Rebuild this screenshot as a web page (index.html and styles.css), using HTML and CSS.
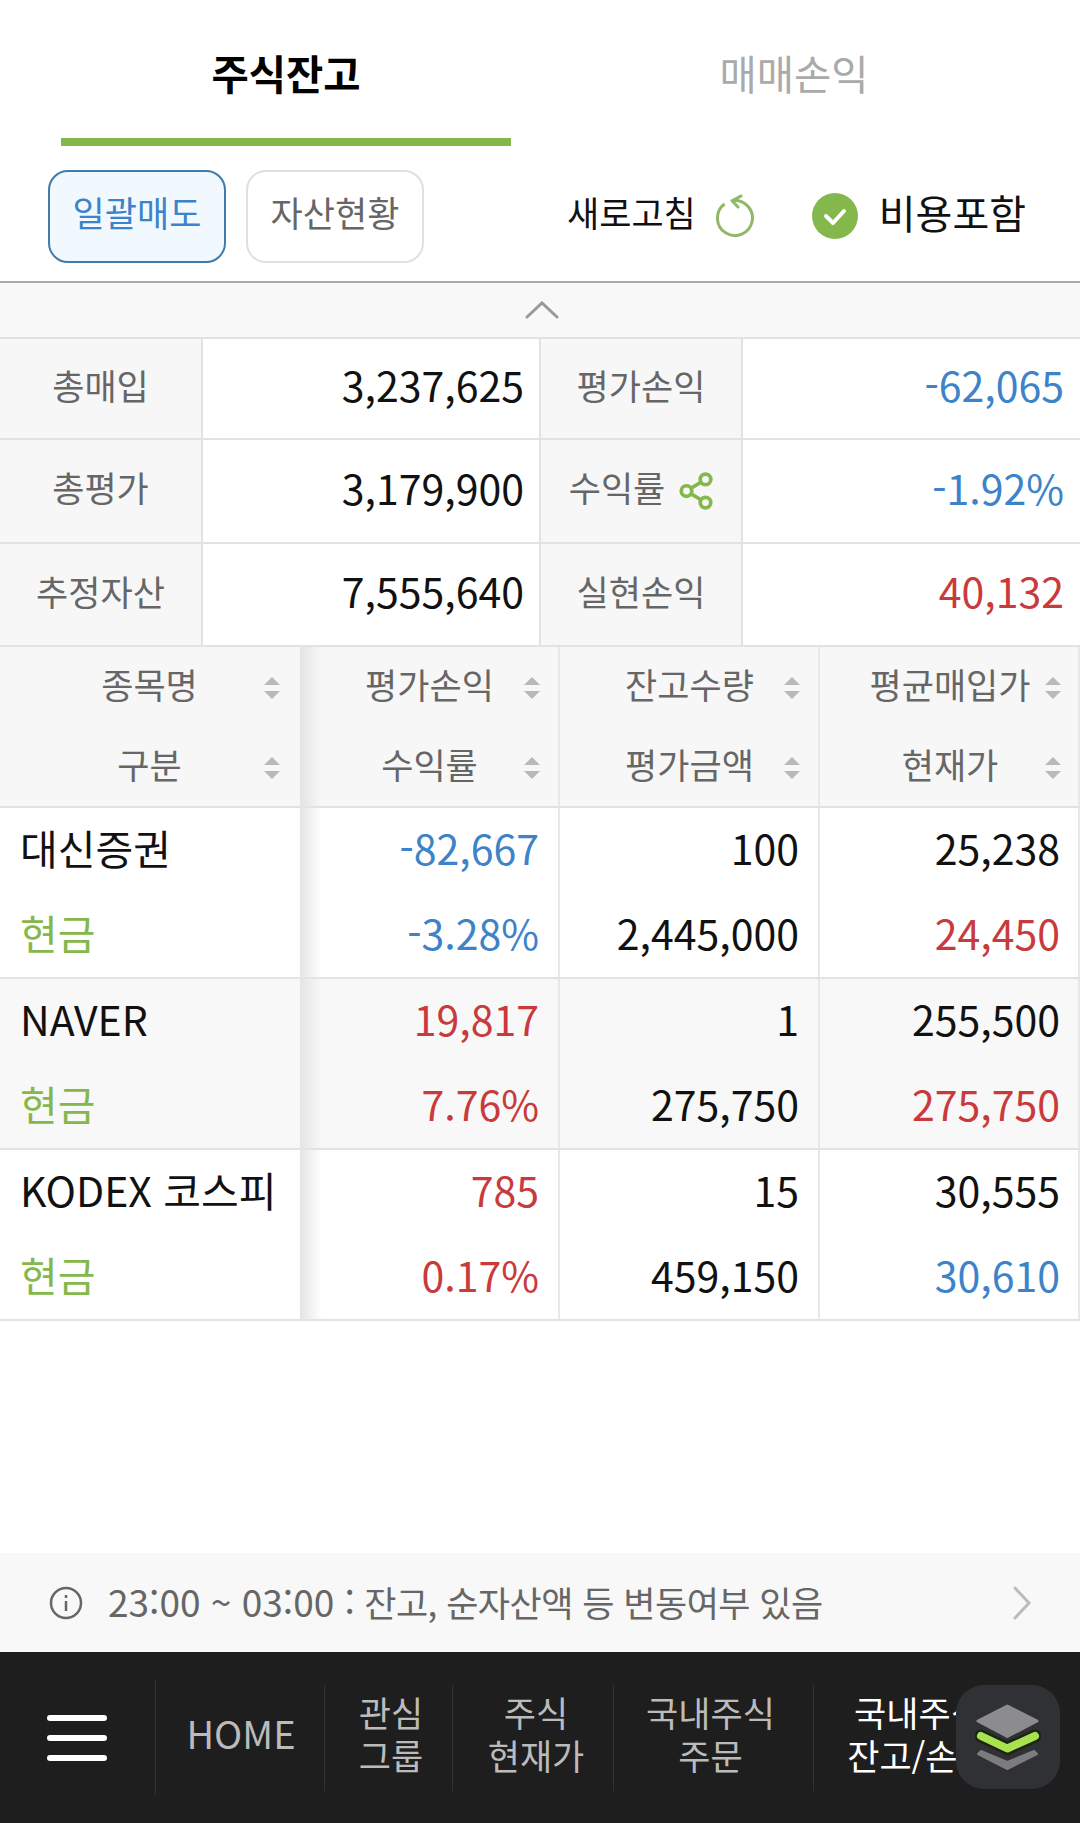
FILE: index.html

```html
<!DOCTYPE html>
<html lang="ko">
<head>
    <meta charset="UTF-8">
    <meta name="viewport" content="width=device-width, initial-scale=1.0">
    <title>주식잔고</title>
    <link rel="stylesheet" href="styles.css">
</head>
<body>
    <svg class="defs" width="0" height="0">
        <symbol id="sort" viewBox="0 0 16 22">
            <path d="M8 0l8 8H0z M0 14h16l-8 8z" fill="#b9b9b9"/>
        </symbol>
    </svg>

    <div class="page">
        <div class="tabs">
            <div class="tab active">주식잔고</div>
            <div class="tab">매매손익</div>
        </div>

        <div class="toolbar">
            <div class="btn btn-primary">일괄매도</div>
            <div class="btn">자산현황</div>
            <div class="refresh">
                <span>새로고침</span>
                <svg width="40" height="44" viewBox="0 0 40 44" fill="none" stroke="#8fb868" stroke-width="3">
                    <path d="M17 6.800A17.500 17.500 0 1 1 9.500 10"/>
                    <path d="M26 2l-9 4.800L23 13" stroke-linecap="round" stroke-linejoin="round"/>
                </svg>
            </div>
            <div class="include">
                <svg width="46" height="46" viewBox="0 0 46 46">
                    <circle cx="23" cy="23" r="23" fill="#84b84c"/>
                    <path d="M14 23l7 7 11-12" fill="none" stroke="#fff" stroke-width="4" stroke-linecap="round" stroke-linejoin="round"/>
                </svg>
                <span>비용포함</span>
            </div>
        </div>

        <div class="collapse">
            <svg width="34" height="18" viewBox="0 0 34 18" fill="none" stroke="#999" stroke-width="3" stroke-linecap="round">
                <path d="M2 16L17 2l15 14"/>
            </svg>
        </div>

        <div class="summary">
            <div class="label">총매입</div>
            <div class="value">3,237,625</div>
            <div class="label">평가손익</div>
            <div class="value blue">-62,065</div>

            <div class="label">총평가</div>
            <div class="value">3,179,900</div>
            <div class="label">
                수익률
                <svg class="share" width="34" height="38" viewBox="0 0 32 36" fill="none" stroke="#84b84c" stroke-width="3.500">
                    <circle cx="25" cy="7" r="5"/>
                    <circle cx="7" cy="18" r="5"/>
                    <circle cx="25" cy="29" r="5"/>
                    <path d="M11 15.500l10-6M11 20.500l10 6"/>
                </svg>
            </div>
            <div class="value blue">-1.92%</div>

            <div class="label">추정자산</div>
            <div class="value">7,555,640</div>
            <div class="label">실현손익</div>
            <div class="value red">40,132</div>
        </div>

        <div class="stocks">
            <div class="stock-row stock-head">
                <div class="cell">
                    <div class="head-line"><span>종목명</span><svg class="sort"><use href="#sort"/></svg></div>
                    <div class="head-line"><span>구분</span><svg class="sort"><use href="#sort"/></svg></div>
                </div>
                <div class="cell">
                    <div class="head-line"><span>평가손익</span><svg class="sort"><use href="#sort"/></svg></div>
                    <div class="head-line"><span>수익률</span><svg class="sort"><use href="#sort"/></svg></div>
                </div>
                <div class="cell">
                    <div class="head-line"><span>잔고수량</span><svg class="sort"><use href="#sort"/></svg></div>
                    <div class="head-line"><span>평가금액</span><svg class="sort"><use href="#sort"/></svg></div>
                </div>
                <div class="cell">
                    <div class="head-line"><span>평균매입가</span><svg class="sort"><use href="#sort"/></svg></div>
                    <div class="head-line"><span>현재가</span><svg class="sort"><use href="#sort"/></svg></div>
                </div>
            </div>

            <div class="stock-row">
                <div class="cell name"><div>대신증권</div><div class="green">현금</div></div>
                <div class="cell"><div class="blue">-82,667</div><div class="blue">-3.28%</div></div>
                <div class="cell"><div>100</div><div>2,445,000</div></div>
                <div class="cell"><div>25,238</div><div class="red">24,450</div></div>
            </div>
            <div class="stock-row alt">
                <div class="cell name"><div>NAVER</div><div class="green">현금</div></div>
                <div class="cell"><div class="red">19,817</div><div class="red">7.76%</div></div>
                <div class="cell"><div>1</div><div>275,750</div></div>
                <div class="cell"><div>255,500</div><div class="red">275,750</div></div>
            </div>
            <div class="stock-row">
                <div class="cell name"><div>KODEX 코스피</div><div class="green">현금</div></div>
                <div class="cell"><div class="red">785</div><div class="red">0.17%</div></div>
                <div class="cell"><div>15</div><div>459,150</div></div>
                <div class="cell"><div>30,555</div><div class="blue">30,610</div></div>
            </div>
        </div>

        <div class="spacer"></div>

        <div class="notice">
            <svg width="34" height="34" viewBox="0 0 34 34" fill="none" stroke="#666" stroke-width="2.500">
                <circle cx="17" cy="17" r="15"/>
                <path d="M17 15v10"/>
                <path d="M17 9v3"/>
            </svg>
            <span class="notice-text"><span class="notice-time">23:00 ~ 03:00 :</span> 잔고, 순자산액 등 변동여부 있음</span>
            <svg class="notice-arrow" width="20" height="34" viewBox="0 0 20 34" fill="none" stroke="#bbb" stroke-width="3" stroke-linecap="round">
                <path d="M3 2l14 15L3 32"/>
            </svg>
        </div>

        <div class="nav">
            <div class="menu"><i></i><i></i><i></i></div>
            <div class="nav-item home">HOME</div>
            <div class="nav-item w-group">관심<br>그룹</div>
            <div class="nav-item w-price">주식<br>현재가</div>
            <div class="nav-item w-order">국내주식<br>주문</div>
            <div class="nav-item w-balance active">국내주식<br>잔고/손익</div>
        </div>

        <div class="float-btn">
            <svg width="66" height="66" viewBox="0 0 66 66">
                <polygon points="32.300,2 62,17 32.300,32.500 3,17" fill="#8c8c8e" stroke="#8c8c8e" stroke-width="3" stroke-linejoin="round"/>
                <polygon points="6,47 32.300,58 59,47 62,50 32.300,65 3,50" fill="#7c7c7e" stroke="#7c7c7e" stroke-width="2" stroke-linejoin="round"/>
                <polyline points="6,32 32.300,44.500 60,32" fill="none" stroke="#1e2414" stroke-width="13" stroke-linecap="round" stroke-linejoin="round"/>
                <polyline points="6,32 32.300,44.500 60,32" fill="none" stroke="#a8e24e" stroke-width="8" stroke-linecap="round" stroke-linejoin="round"/>
            </svg>
        </div>
    </div>
</body>
</html>
```

FILE: styles.css

```css
* { margin: 0; padding: 0; box-sizing: border-box; }
body { font-family: "Noto Sans CJK KR", "Noto Sans", sans-serif; background: #fff; color: #111; }
.defs { position: absolute; }
.page { position: relative; width: 1080px; height: 1823px; display: flex; flex-direction: column; overflow: hidden; }

.blue { color: #3d83c9; }
.red { color: #c93a3c; }
.green { color: #84b84c; }

.tabs { height: 146px; padding: 0 61px; display: flex; gap: 58px; }
.tab { width: 450px; font-size: 40.5px; line-height: 146px; text-align: center; color: #aaa; }
.tab.active { font-weight: 700; color: #000; border-bottom: 8px solid #84b84c; }

.toolbar { height: 135px; padding: 24px 0 0 48px; display: flex; align-items: flex-start; }
.btn { width: 178px; height: 93px; margin-right: 20px; border: 2px solid #e0e0e0; border-radius: 20px; font-size: 35px; line-height: 80px; text-align: center; color: #666; }
.btn-primary { background: #f2f9fe; border-color: #3f7cac; color: #3d83c9; }
.refresh { height: 92px; margin-left: 123px; display: flex; align-items: center; gap: 19px; font-size: 35px; color: #111; }
.refresh span, .include span { padding-bottom: 9px; }
.include { height: 92px; margin-left: 57px; display: flex; align-items: center; gap: 21px; font-size: 40px; color: #111; }

.collapse { height: 58px; padding-left: 4px; background: #f8f8f8; border-top: 2px solid #aaa; border-bottom: 2px solid #e2e2e2; display: flex; align-items: center; justify-content: center; }

.summary { height: 308px; display: grid; grid-template-columns: 203px 338px 202px 337px; grid-template-rows: 101px 104px 103px; }
.summary .label, .summary .value { display: flex; align-items: center; padding-bottom: 9px; border-bottom: 2px solid #e2e2e2; font-size: 41px; }
.summary .label { justify-content: center; gap: 14px; background: #f7f7f7; font-size: 35px; color: #666; border-right: 2px solid #e2e2e2; }
.summary .value { justify-content: flex-end; padding-right: 15px; border-right: 2px solid #e2e2e2; }
.summary .value:nth-child(4n) { padding-right: 16px; border-right: 0; }
.share { margin-top: 8px; }

.stocks { position: relative; }
.stocks::after { content: ""; position: absolute; left: 300px; top: 0; bottom: 0; width: 22px; background: linear-gradient(90deg, #e4e4e4, rgba(235,235,235,0)); }
.stock-row { height: 171px; display: grid; grid-template-columns: 300px 260px 260px 260px; grid-template-rows: 169px; border-bottom: 2px solid #e2e2e2; }
.stock-head { height: 161px; grid-template-rows: 159px; background: #f7f7f7; }
.alt { background: #f8f8f8; }
.cell { padding: 0 19px 6px 20px; border-right: 2px solid #e8e8e8; font-size: 41px; line-height: 85px; text-align: right; display: flex; flex-direction: column; justify-content: center; }
.cell:first-child { border-right: 0; }
.cell:last-child { padding-right: 18px; }
.name { text-align: left; }
.stock-head .cell { padding-bottom: 0; justify-content: flex-start; }

.head-line { height: 80px; flex: none; display: flex; align-items: center; justify-content: center; padding: 0 0 8px 0; position: relative; font-size: 35px; color: #666; }
.sort { position: absolute; right: -1px; top: 30px; width: 16px; height: 22px; }
.cell:first-child .head-line { padding-right: 2px; }
.cell:first-child .sort { right: 1px; }

.spacer { flex: 1; }

.notice { height: 99px; background: #f8f8f8; padding: 0 48px 0 49px; display: flex; align-items: center; }
.notice-text { margin-left: 25px; padding-bottom: 4px; font-size: 35px; letter-spacing: -0.5px; color: #666; }
.notice-time { font-size: 37px; letter-spacing: 0; }
.notice-arrow { margin-left: auto; }

.nav { height: 171px; background: #1e1e1e; display: flex; align-items: center; }
.menu { width: 156px; height: 115px; padding-left: 47px; border-right: 1px solid #333; display: flex; flex-direction: column; justify-content: center; gap: 14px; }
.menu i { width: 60px; height: 6px; border-radius: 3px; background: #fff; }
.nav-item { height: 106px; padding-bottom: 10px; flex: none; border-right: 1px solid #333; font-size: 35px; line-height: 43px; text-align: center; color: #bbb; display: flex; align-items: center; justify-content: center; }
.home { width: 169px; padding-left: 2px; font-size: 38px; }
.w-group { width: 128px; padding-left: 5px; }
.w-price { width: 161px; padding-left: 6px; }
.w-order { width: 200px; padding-right: 6px; }
.w-balance { width: 209px; border-right: 0; }
.nav-item.active { color: #fff; }

.float-btn { position: absolute; left: 956px; top: 1685px; width: 104px; height: 104px; border-radius: 28px; background: #303135; display: flex; align-items: center; justify-content: center; }
```
